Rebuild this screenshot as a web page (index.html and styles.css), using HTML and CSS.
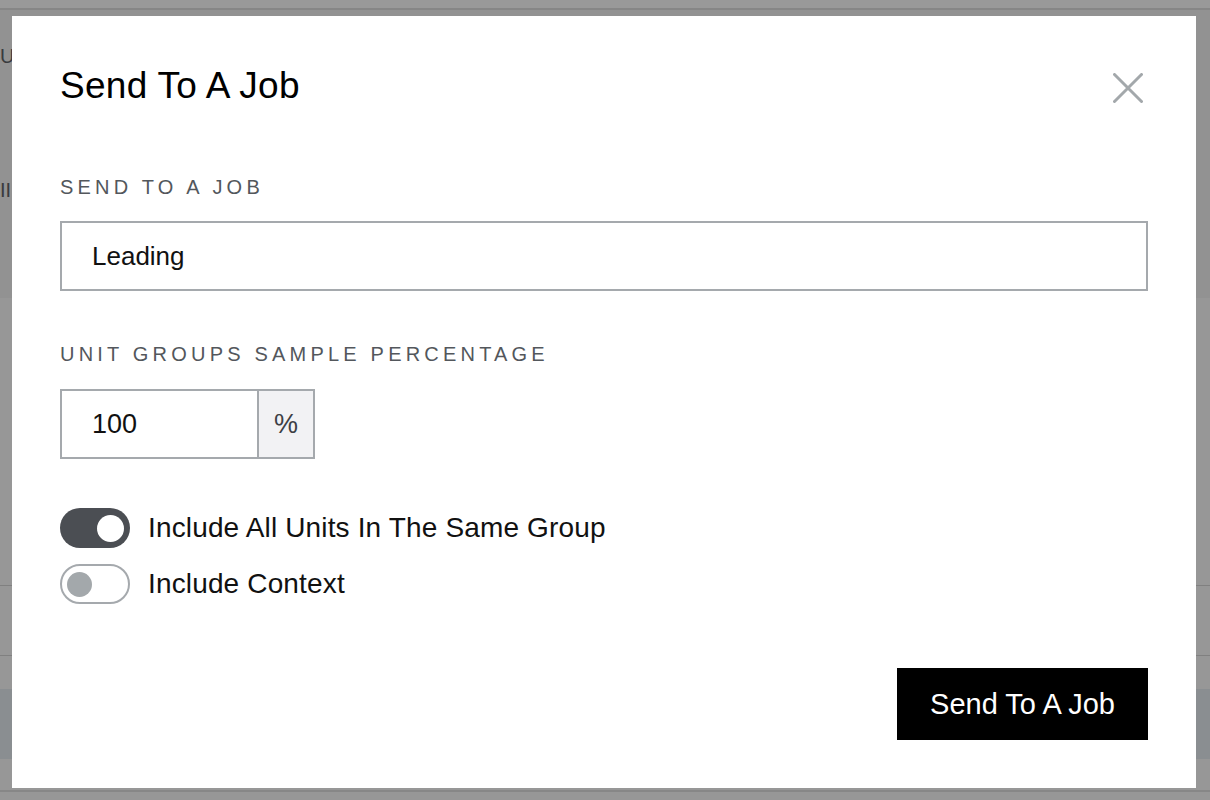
FILE: index.html
```html
<!DOCTYPE html>
<html lang="en">
<head>
<meta charset="utf-8">
<title>Send To A Job</title>
<link rel="stylesheet" href="styles.css">
</head>
<body>
<div class="page">
  <div class="topbar"></div>
  <section class="hero">
    <div class="hero-title">Units</div>
    <div class="hero-sub">II</div>
  </section>
  <div class="row row-tall"></div>
  <div class="row row-mid"></div>
  <div class="row row-gap"></div>
  <div class="row row-band"></div>
  <div class="row row-end"></div>
</div>

<div class="overlay">
  <div class="modal" role="dialog" aria-labelledby="modal-title">
    <div class="modal-header">
      <h2 class="modal-title" id="modal-title">Send To A Job</h2>
      <button class="close-btn" aria-label="Close">
        <svg width="30" height="30" viewBox="0 0 30 30" fill="none">
          <path d="M1.5 1.5 L28.5 28.5 M28.5 1.5 L1.5 28.5" stroke="#a3a8ab" stroke-width="3" stroke-linecap="round"/>
        </svg>
      </button>
    </div>

    <div class="field">
      <label class="field-label">Send To A Job</label>
      <input class="text-input" type="text" value="Leading">
    </div>

    <div class="field field-second">
      <label class="field-label field-label-num">Unit Groups Sample Percentage</label>
      <div class="num-group">
        <input class="num-input" type="text" value="100">
        <span class="num-addon">%</span>
      </div>
    </div>

    <div class="toggles">
      <div class="toggle-row">
        <span class="toggle toggle-on"><span class="knob"></span></span>
        <span class="toggle-label">Include All Units In The Same Group</span>
      </div>
      <div class="toggle-row">
        <span class="toggle toggle-off"><span class="knob"></span></span>
        <span class="toggle-label">Include Context</span>
      </div>
    </div>

    <div class="actions">
      <button class="primary-btn">Send To A Job</button>
    </div>
  </div>
</div>
</body>
</html>
```

FILE: styles.css
```css
* {
  box-sizing: border-box;
}

html, body {
  margin: 0;
  padding: 0;
  height: 100%;
  overflow: hidden;
}

body {
  font-family: "Liberation Sans", Arial, sans-serif;
  background: #fcfcfc;
}

/* underlying page */
.page {
  display: flex;
  flex-direction: column;
}

.topbar {
  height: 10px;
  background: #ffffff;
  border-bottom: 2px solid #dfdfdf;
}

.hero {
  height: 288px;
  background: #f3f3f3;
  color: #5f6368;
  font-size: 20px;
  line-height: 24px;
  padding-top: 34px;
}

.hero-sub {
  margin-top: 110px;
}

.row {
  background: #fcfcfc;
}

.row-tall {
  height: 288px;
  border-bottom: 1px solid #d5d5d5;
}

.row-mid {
  height: 70px;
  border-bottom: 1px solid #d5d5d5;
}

.row-gap {
  height: 33px;
}

.row-band {
  height: 70px;
  background: #e6edf2;
}

.row-end {
  height: 33px;
  border-bottom: 2px solid #e1e1e1;
}

/* overlay + modal */
.overlay {
  position: fixed;
  inset: 0;
  background: rgba(0, 0, 0, 0.4);
  display: flex;
  justify-content: flex-start;
  align-items: flex-start;
  padding: 16px 0 0 12px;
}

.modal {
  width: 1184px;
  background: #ffffff;
  padding: 48px;
}

.modal-header {
  display: flex;
  justify-content: space-between;
  align-items: center;
  margin-bottom: 67px;
}

.modal-title {
  margin: 0;
  font-size: 37px;
  line-height: 44px;
  letter-spacing: 0.3px;
  font-weight: 400;
  color: #000;
}

.close-btn {
  width: 40px;
  height: 40px;
  margin-top: 4px;
  padding: 0;
  border: none;
  background: none;
  display: flex;
  align-items: center;
  justify-content: center;
}

.field {
  display: flex;
  flex-direction: column;
}

.field-second {
  margin-top: 51px;
}

.field-label {
  font-size: 20px;
  line-height: 24px;
  letter-spacing: 4.2px;
  text-transform: uppercase;
  color: #53575c;
  margin-bottom: 22px;
}

.field-label-num {
  margin-bottom: 23px;
}

.text-input {
  width: 100%;
  height: 70px;
  border: 2px solid #a5a9ad;
  border-radius: 0;
  padding: 0 30px;
  font-family: inherit;
  font-size: 26px;
  color: #111;
  background: #fff;
  outline: none;
}

.num-group {
  display: flex;
  width: 255px;
}

.num-input {
  width: 199px;
  height: 70px;
  border: 2px solid #a5a9ad;
  border-radius: 0;
  padding: 0 30px;
  font-family: inherit;
  font-size: 27px;
  color: #111;
  background: #fff;
  outline: none;
}

.num-addon {
  width: 56px;
  height: 70px;
  border: 2px solid #a5a9ad;
  border-left: none;
  background: #f2f2f4;
  display: flex;
  align-items: center;
  justify-content: center;
  font-size: 27px;
  color: #3d4045;
}

.toggles {
  margin-top: 49px;
  display: flex;
  flex-direction: column;
  gap: 16px;
}

.toggle-row {
  display: flex;
  align-items: center;
  gap: 18px;
}

.toggle {
  width: 70px;
  height: 40px;
  border-radius: 20px;
  display: flex;
  align-items: center;
  flex-shrink: 0;
}

.toggle-on {
  background: #4b4e53;
  justify-content: flex-end;
  padding: 0 6px;
}

.toggle-on .knob {
  width: 27px;
  height: 27px;
  border-radius: 50%;
  background: #fff;
}

.toggle-off {
  background: #fff;
  border: 2px solid #a5a9ad;
  justify-content: flex-start;
  padding: 0 5px;
}

.toggle-off .knob {
  width: 25px;
  height: 25px;
  border-radius: 50%;
  background: #a3a8ab;
}

.toggle-label {
  font-size: 28px;
  line-height: 34px;
  letter-spacing: 0.15px;
  color: #111;
}

.actions {
  margin-top: 64px;
  display: flex;
  justify-content: flex-end;
}

.primary-btn {
  height: 72px;
  padding: 0 33px;
  border: none;
  border-radius: 0;
  background: #000;
  color: #fff;
  font-family: inherit;
  font-size: 29px;
}
```
